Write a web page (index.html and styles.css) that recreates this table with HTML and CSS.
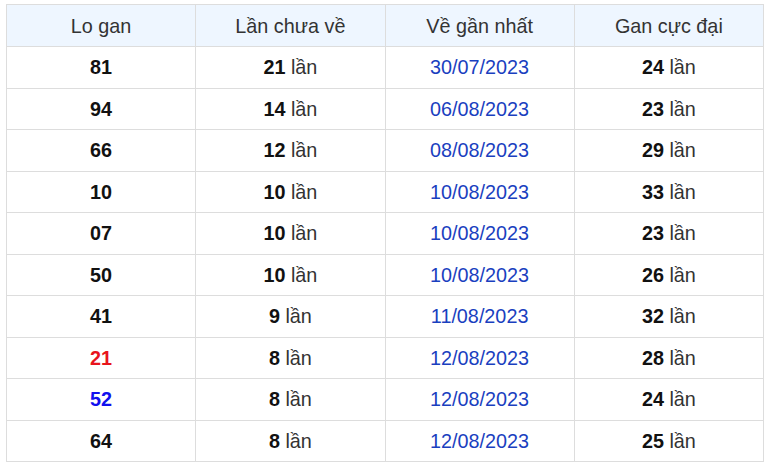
FILE: index.html
```html
<!DOCTYPE html>
<html lang="vi">
<head>
<meta charset="utf-8">
<link rel="stylesheet" href="styles.css">
</head>
<body>
<div class="wrap">
<table class="gan">
<thead>
<tr><th>Lo gan</th><th>Lần chưa về</th><th>Về gần nhất</th><th>Gan cực đại</th></tr>
</thead>
<tbody>
<tr><td><b>81</b></td><td><b>21</b> lần</td><td class="date">30/07/2023</td><td><b>24</b> lần</td></tr>
<tr><td><b>94</b></td><td><b>14</b> lần</td><td class="date">06/08/2023</td><td><b>23</b> lần</td></tr>
<tr><td><b>66</b></td><td><b>12</b> lần</td><td class="date">08/08/2023</td><td><b>29</b> lần</td></tr>
<tr><td><b>10</b></td><td><b>10</b> lần</td><td class="date">10/08/2023</td><td><b>33</b> lần</td></tr>
<tr><td><b>07</b></td><td><b>10</b> lần</td><td class="date">10/08/2023</td><td><b>23</b> lần</td></tr>
<tr><td><b>50</b></td><td><b>10</b> lần</td><td class="date">10/08/2023</td><td><b>26</b> lần</td></tr>
<tr><td><b>41</b></td><td><b>9</b> lần</td><td class="date">11/08/2023</td><td><b>32</b> lần</td></tr>
<tr><td><b class="red">21</b></td><td><b>8</b> lần</td><td class="date">12/08/2023</td><td><b>28</b> lần</td></tr>
<tr><td><b class="blue">52</b></td><td><b>8</b> lần</td><td class="date">12/08/2023</td><td><b>24</b> lần</td></tr>
<tr><td><b>64</b></td><td><b>8</b> lần</td><td class="date">12/08/2023</td><td><b>25</b> lần</td></tr>
</tbody>
</table>
</div>
</body>
</html>
```
FILE: styles.css
```css
html, body {
  margin: 0;
  background: #fff;
}
.wrap {
  padding: 4px 6px 0 6px;
}
.gan {
  width: 758px;
  border-collapse: collapse;
  table-layout: fixed;
  font-family: "Liberation Sans", Arial, sans-serif;
  font-size: 19.8px;
  color: #333;
}
.gan th, .gan td {
  border: 1px solid #ddd;
  text-align: center;
  padding: 0;
  height: 40.5px;
  line-height: 22px;
}
.gan th {
  font-weight: normal;
  background: #eef6ff;
  color: #333;
  height: 41px;
}
.gan td b {
  color: #111;
  font-weight: bold;
}
.gan td b.red { color: #e8141c; }
.gan td b.blue { color: #1010ee; }
.gan td.date { color: #1a3fbf; }
```
